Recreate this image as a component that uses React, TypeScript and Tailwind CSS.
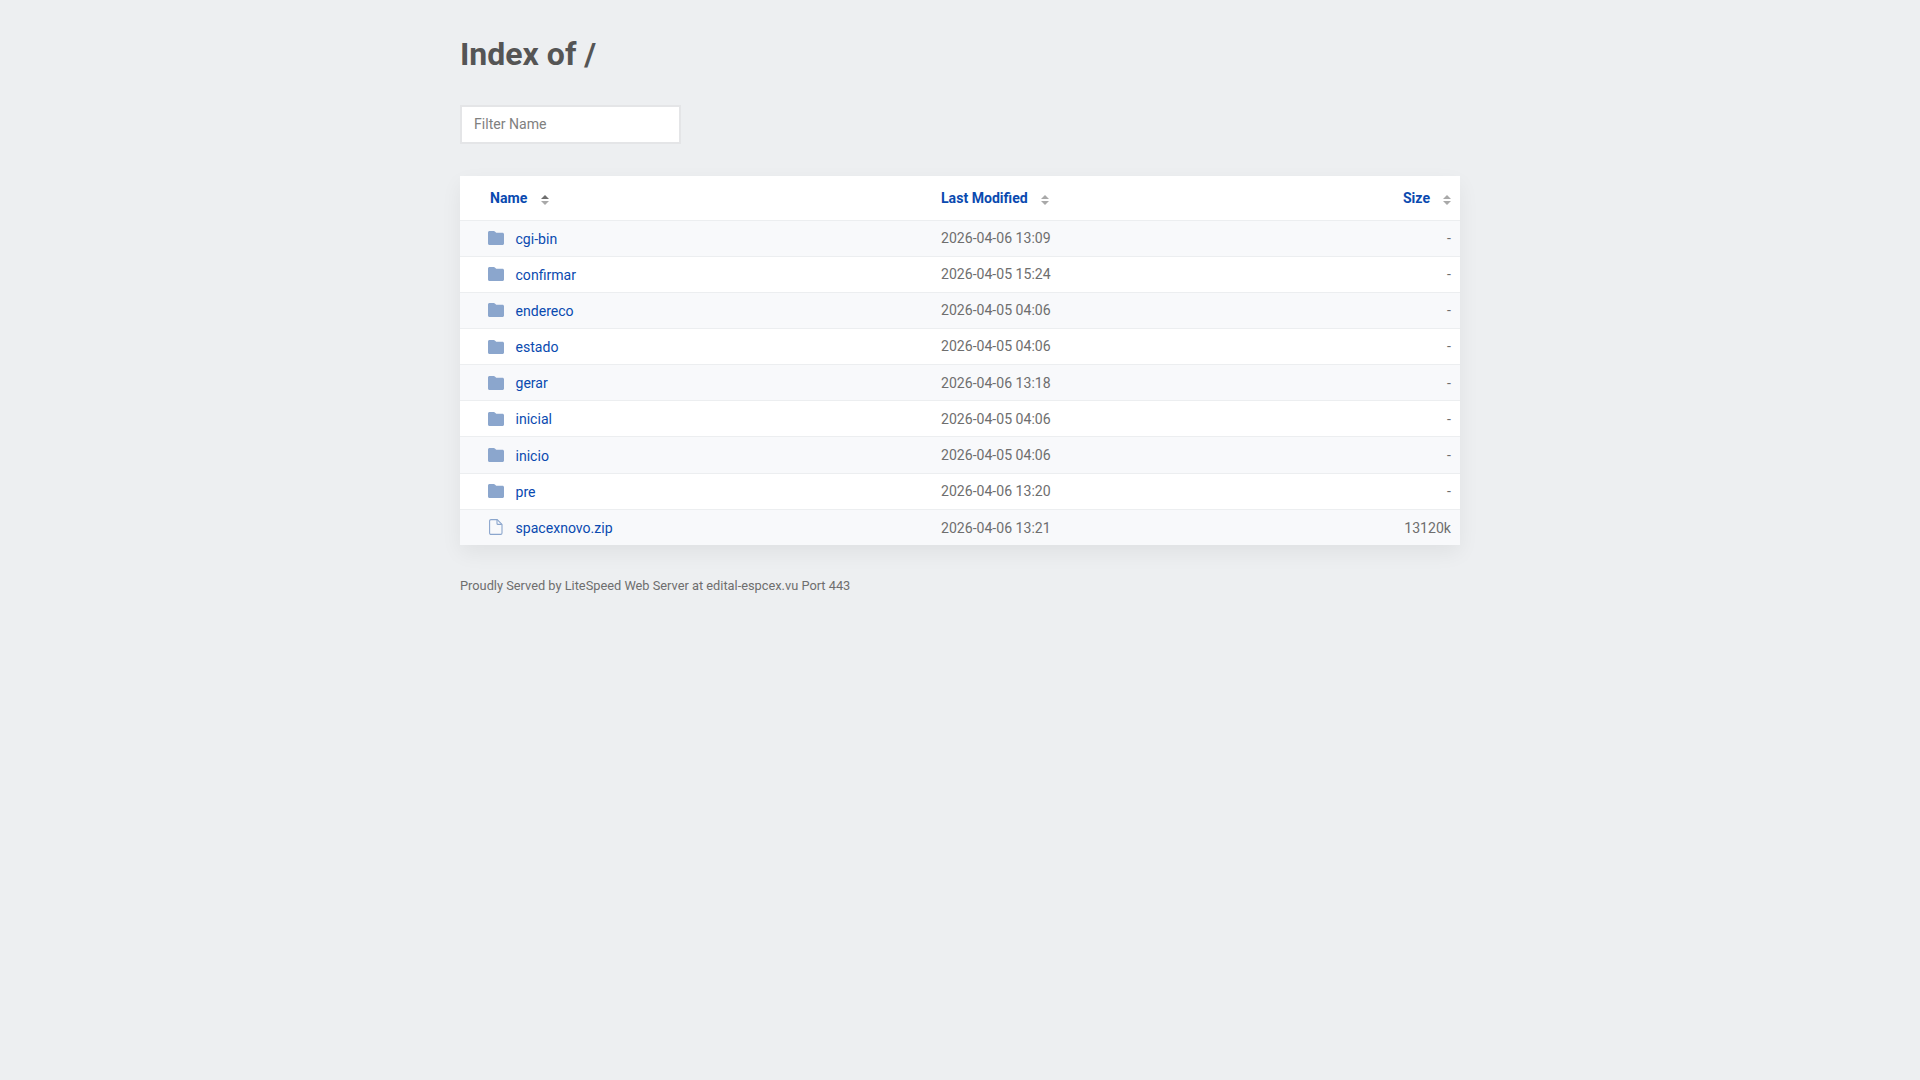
const rows: [string, string, string, boolean][] = [
  ["cgi-bin", "2026-04-06 13:09", "-", true],
  ["confirmar", "2026-04-05 15:24", "-", true],
  ["endereco", "2026-04-05 04:06", "-", true],
  ["estado", "2026-04-05 04:06", "-", true],
  ["gerar", "2026-04-06 13:18", "-", true],
  ["inicial", "2026-04-05 04:06", "-", true],
  ["inicio", "2026-04-05 04:06", "-", true],
  ["pre", "2026-04-06 13:20", "-", true],
  ["spacexnovo.zip", "2026-04-06 13:21", "13120k", false],
];

function FolderIcon() {
  return (
    <svg width="16" height="14" viewBox="0 0 16 14" className="block shrink-0">
      <path d="M1.5 0h4.2c.5 0 .9.2 1.2.5l1.3 1.3h6.3c.8 0 1.5.7 1.5 1.5v9.2c0 .8-.7 1.5-1.5 1.5h-13C.7 14 0 13.3 0 12.5v-11C0 .7.7 0 1.5 0z" fill="#8ba6cd" />
    </svg>
  );
}

function FileIcon() {
  return (
    <svg width="14" height="16" viewBox="0 0 14 16" className="block shrink-0" fill="none" stroke="#8ba6cd" strokeWidth="1.1">
      <path d="M2 .6h6.2L13 5.4v8.6c0 .8-.6 1.4-1.4 1.4H2c-.8 0-1.4-.6-1.4-1.4V2C.6 1.2 1.2.6 2 .6z" />
      <path d="M8 .8v3.6c0 .6.4 1 1 1h3.8" />
    </svg>
  );
}

function SortIcon({ dark }: { dark?: boolean }) {
  return (
    <svg width="8" height="10" viewBox="0 0 8 10" className="inline-block shrink-0">
      <path d="M4 0L8 4H0z" fill={dark ? "#6f6f6f" : "#a9a9a9"} />
      <path d="M4 10L0 6h8z" fill="#a9a9a9" />
    </svg>
  );
}

export default function App() {
  return (
    <div className="min-h-[1080px] bg-[#edeff1] text-[14.08px] text-[#6e6e6e] font-['Roboto',sans-serif]">
      <div className="w-[1000px] pt-[36px] ml-[460px]">
        <h1 className="text-[32px] leading-[36px] font-bold text-[#555555]">Index of /</h1>
        <input
          placeholder="Filter Name"
          className="mt-[33px] block w-[221px] h-[39px] bg-white border-2 border-[#e4e5e7] pl-[12px] pb-[2px] text-[14.08px] outline-none placeholder:text-[#808080]"
        />
        <div className="mt-[32px] bg-white shadow-[0_8px_20px_rgba(0,0,0,0.06)]">
          <div className="flex items-center h-[44.65px] border-b border-[#eceef0] text-[#0a4ab0]">
            <div className="w-[481px] pl-[30px] pt-[2px] flex items-center">
              <span className="font-bold">Name</span>
              <span className="ml-[14px] mt-[3px] flex"><SortIcon dark /></span>
            </div>
            <div className="flex-1 pt-[2px] flex items-center">
              <span className="font-bold">Last Modified</span>
              <span className="ml-[13px] mt-[3px] flex"><SortIcon /></span>
            </div>
            <div className="pr-[9px] pt-[2px] flex items-center">
              <span className="font-bold">Size</span>
              <span className="ml-[13px] mt-[3px] flex"><SortIcon /></span>
            </div>
          </div>
          {rows.map(([name, date, size, folder], i) => (
            <div
              key={name}
              className={
                "flex items-center " +
                (i % 2 === 0 ? "bg-[#f8f9fb] " : "bg-white ") +
                (i < rows.length - 1 ? "h-[36.15px] border-b border-[#eceef0]" : "h-[35.2px]")
              }
            >
              <div className="w-[481px] flex items-center">
                <span className="w-[55.5px] pl-[28px] flex">
                  <span className="flex w-[16px] justify-center">{folder ? <FolderIcon /> : <FileIcon />}</span>
                </span>
                <a className="text-[#0a4ab0] mt-[2px]">{name}</a>
              </div>
              <div className={i === rows.length - 1 ? "flex-1 mt-[2px]" : "flex-1 mt-[0.8px]"}>{date}</div>
              <div className={i === rows.length - 1 ? "pr-[9px] mt-[2px]" : "pr-[9px] mt-[0.8px]"}>{size}</div>
            </div>
          ))}
        </div>
        <div className="mt-[33px] text-[12.8px] leading-[16px] text-[#6e6e6e]">
          Proudly Served by LiteSpeed Web Server at edital-espcex.vu Port 443
        </div>
      </div>
    </div>
  );
}
